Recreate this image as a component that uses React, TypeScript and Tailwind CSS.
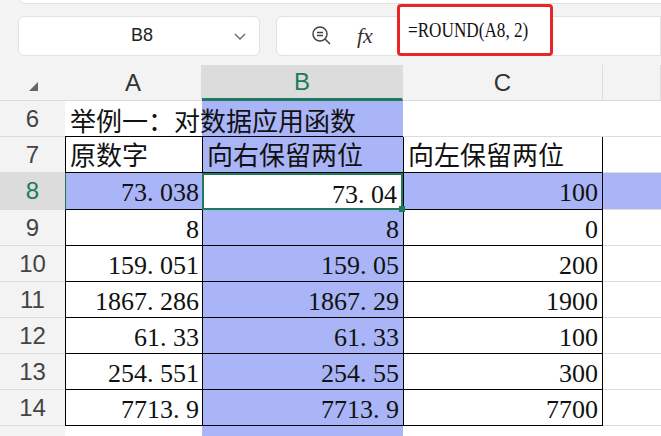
import React from "react";

const serif = { fontFamily: '"Liberation Serif","Noto Sans CJK SC",serif' };
const rows: [string, string, string, string][] = [
  ["8", "73. 038", "73. 04", "100"],
  ["9", "8", "8", "0"],
  ["10", "159. 051", "159. 05", "200"],
  ["11", "1867. 286", "1867. 29", "1900"],
  ["12", "61. 33", "61. 33", "100"],
  ["13", "254. 551", "254. 55", "300"],
  ["14", "7713. 9", "7713. 9", "7700"],
];
const L = "#a9b5f7";
const sans = { fontFamily: '"Liberation Sans",sans-serif' };

export default function App() {
  return (
    <div className="w-[661px] h-[436px] overflow-hidden bg-[#f3f3f3] relative" style={sans}>
      <div className="absolute left-[18px] right-[-20px] top-[-10px] h-[14px] bg-white rounded-b-[8px] border border-[#e3e3e3]" />
      <div className="flex h-[65px] items-center pt-[6px]">
        <div className="ml-[18px] w-[242px] h-[40px] bg-white rounded-[6px] border border-[#e2e2e2] flex items-center relative">
          <span className="absolute left-[112px] text-[18px] text-[#222]">B8</span>
          <svg className="absolute right-[12px]" width="14" height="10" viewBox="0 0 14 10"><path d="M2 3l5 5 5-5" fill="none" stroke="#666" strokeWidth="1.3" /></svg>
        </div>
        <div className="ml-[16px] flex-1 h-[40px] bg-white rounded-l-[6px] border border-[#e2e2e2] flex items-center relative">
          <svg className="absolute left-[34px]" width="22" height="22" viewBox="0 0 22 22"><circle cx="9" cy="9" r="7" fill="none" stroke="#444" strokeWidth="1.5" /><path d="M6 7.5h6M6 10.5h6M14 14l5 5" stroke="#444" strokeWidth="1.5" /></svg>
          <span className="absolute left-[80px] text-[22px] italic text-[#333]" style={serif}>fx</span>
          <div className="absolute left-[120px] top-[-13px] w-[156px] h-[52px] border-[3px] border-[#e8262a] rounded-[4px] bg-white flex items-center pl-[8px]">
            <span className="text-[22px] text-[#111] scale-x-[0.78] origin-left whitespace-nowrap" style={serif}>=ROUND(A8, 2)</span>
          </div>
        </div>
      </div>
      <div className="grid grid-cols-[65px_137px_201px_200px_58px] grid-rows-[36px_36px_36px_37px_36px_36px_36px_36px_36px_36px_36px] bg-white text-[26px]" style={serif}>
        <div className="bg-[#f3f3f3] border-b border-[#dcdcdc] flex items-end justify-center pb-[8px]"><svg width="12" height="12"><path d="M11 2L11 11L2 11Z" fill="#666" /></svg></div>
        {["A", "B", "C", ""].map((c) => (
          <div key={c || "d"} className={`flex items-center justify-center text-[24px] border-r border-[#dcdcdc] ${c === "B" ? "bg-[#dcdcdc] text-[#1d7a5f] border-b-[3px] border-b-[#1d7a5f]" : "bg-[#f3f3f3] text-[#333] border-b border-[#dcdcdc]"}`} style={sans}>{c}</div>
        ))}
        <div className="bg-[#f3f3f3] text-[#444] text-[24px] flex items-center justify-center border-b border-[#dcdcdc]" style={sans}>6</div>
        <div className="col-span-2 relative border-b border-black">
          <div className="absolute left-[137px] top-0 bottom-0 w-[201px]" style={{ background: L }} />
          <span className="absolute left-[5px] top-[2px] whitespace-nowrap text-[#111]">举例一：对数据应用函数</span>
        </div>
        <div className="border-b border-[#dcdcdc]" />
        <div className="border-b border-[#dcdcdc]" />
        <div className="bg-[#f3f3f3] text-[#444] text-[24px] flex items-center justify-center border-b border-[#dcdcdc]" style={sans}>7</div>
        <div className="border-l border-b border-black px-[4px] whitespace-nowrap text-[#111]">原数字</div>
        <div className="border-l border-b border-black px-[4px] whitespace-nowrap text-[#111]" style={{ background: L }}>向右保留两位</div>
        <div className="border-l border-r border-b border-black px-[4px] whitespace-nowrap text-[#111]">向左保留两位</div>
        <div className="border-b border-[#dcdcdc]" />
        {rows.map(([n, a, b, c]) => {
          const sel = n === "8";
          return (
            <React.Fragment key={n}>
              <div className={`text-[24px] flex items-center justify-center border-b border-[#dcdcdc] ${sel ? "bg-[#dcdcdc] text-[#1d7a5f]" : "bg-[#f3f3f3] text-[#444]"}`} style={sans}>{n}</div>
              <div className={`border-l border-b border-black text-right pr-[3px] text-[#111] whitespace-pre ${sel ? "border-l-[#1d7a5f]" : ""}`} style={{ background: sel ? L : "white" }}>{a}</div>
              <div className={`text-right pr-[4px] text-[#111] whitespace-pre ${sel ? "border-2 border-[#1d7a5f] bg-white relative" : "border-l border-b border-black"}`} style={sel ? {} : { background: L }}>
                {b}
                {sel && <div className="absolute right-[-4px] bottom-[-4px] w-[6px] h-[6px] bg-[#1d7a5f]" />}
              </div>
              <div className="border-l border-r border-b border-black text-right pr-[4px] text-[#111]" style={{ background: sel ? L : "white" }}>{c}</div>
              <div className="border-b border-[#dcdcdc]" style={{ background: sel ? L : "white" }} />
            </React.Fragment>
          );
        })}
        <div className="bg-[#f3f3f3] text-[#444] text-[24px] text-center pt-[2px]" style={sans}>15</div>
        <div />
        <div style={{ background: L }} />
        <div />
        <div />
      </div>
    </div>
  );
}
